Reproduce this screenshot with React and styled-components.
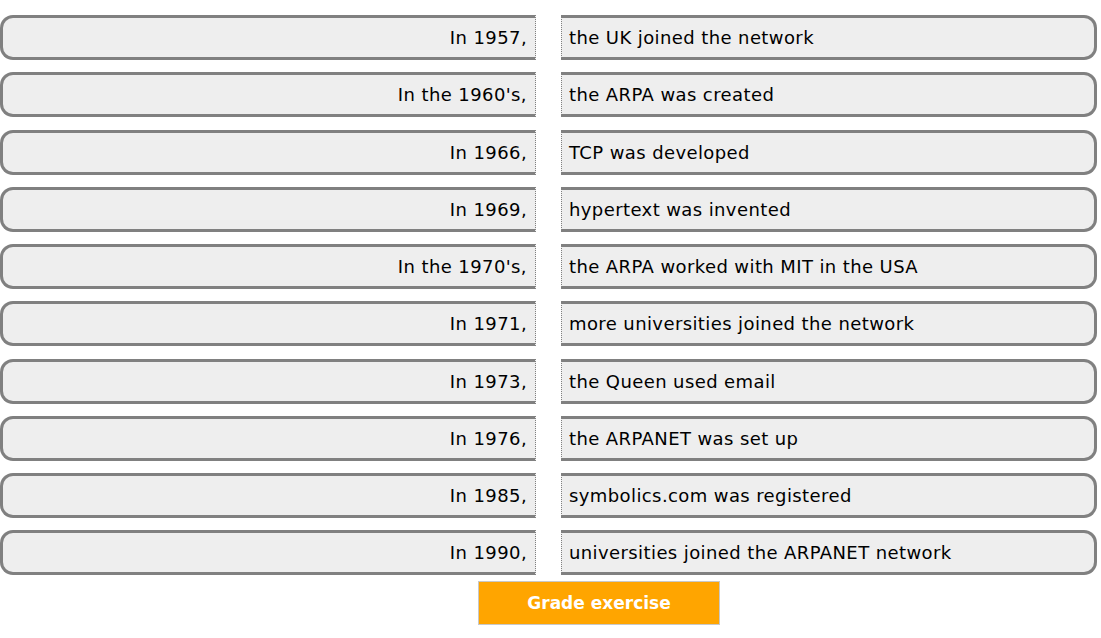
import styled, { createGlobalStyle } from "styled-components";

const rows = [
  ["In 1957,", "the UK joined the network"],
  ["In the 1960's,", "the ARPA was created"],
  ["In 1966,", "TCP was developed"],
  ["In 1969,", "hypertext was invented"],
  ["In the 1970's,", "the ARPA worked with MIT in the USA"],
  ["In 1971,", "more universities joined the network"],
  ["In 1973,", "the Queen used email"],
  ["In 1976,", "the ARPANET was set up"],
  ["In 1985,", "symbolics.com was registered"],
  ["In 1990,", "universities joined the ARPANET network"],
];

const GlobalStyle = createGlobalStyle`
  body {
    margin: 0;
    background: #fff;
    font-family: "DejaVu Sans", Verdana, sans-serif;
  }
`;

const Page = styled.div`
  width: 1097px;
  padding-top: 15px;
  display: flex;
  flex-direction: column;
  gap: 12.25px;
`;

const Row = styled.div`
  display: flex;
  justify-content: space-between;
  height: 45px;
`;

const Half = styled.div`
  width: 536px;
  box-sizing: border-box;
  height: 45px;
  display: flex;
  align-items: center;
  background: #eeeeee;
  border: 3px solid #808080;
  font-size: 18px;
  color: #000;
  letter-spacing: 0.4px;
  ${({ $side }) =>
    $side === "left"
      ? `
    border-right: 1px dotted #808080;
    border-radius: 13px 0 0 13px;
    justify-content: flex-end;
    padding-right: 8px;
  `
      : `
    border-left: 1px dotted #808080;
    border-radius: 0 13px 13px 0;
    padding-left: 7px;
  `}
`;

const Footer = styled.div`
  display: flex;
  justify-content: center;
  padding-left: 101px;
  margin-top: -7px;
`;

const GradeButton = styled.button`
  width: 242px;
  height: 44px;
  background: #ffa500;
  border: 1px solid #c8c8c8;
  color: #fff;
  font-family: "DejaVu Sans", Verdana, sans-serif;
  font-weight: bold;
  font-size: 17px;
  cursor: pointer;
`;

export default function App() {
  return (
    <>
      <GlobalStyle />
      <Page>
        {rows.map(([left, right], i) => (
          <Row key={i}>
            <Half $side="left">{left}</Half>
            <Half $side="right">{right}</Half>
          </Row>
        ))}
        <Footer>
          <GradeButton>Grade exercise</GradeButton>
        </Footer>
      </Page>
    </>
  );
}
